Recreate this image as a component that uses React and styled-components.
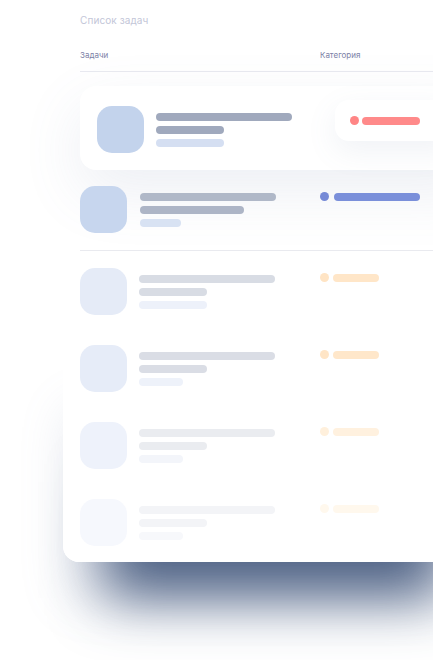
import React from "react";
import styled, { createGlobalStyle } from "styled-components";

const GlobalStyle = createGlobalStyle`
  html, body {
    margin: 0;
    padding: 0;
    background: #ffffff;
  }
  body {
    font-family: Inter, "Noto Sans", "Liberation Sans", sans-serif;
    overflow: hidden;
  }
`;

const Page = styled.div`
  position: relative;
  z-index: 0;
  width: 433px;
  height: 660px;
  overflow: hidden;
  background: #ffffff;
`;

const Card = styled.section`
  position: relative;
  margin-left: 63px;
  width: 420px;
  box-sizing: border-box;
  padding: 13px 0 3px 17px;
  background: #ffffff;
  border-radius: 0 0 0 16px;

  &::before {
    content: "";
    position: absolute;
    left: 0;
    right: 0;
    bottom: 0;
    height: 200px;
    border-radius: 0 0 0 16px;
    z-index: -1;
    box-shadow:
      0 78px 55px -42px rgba(52, 74, 114, 0.86),
      0 42px 50px -6px rgba(125, 140, 175, 0.2);
  }
`;

const Title = styled.h1`
  margin: 0;
  font-size: 10px;
  line-height: 14px;
  font-weight: 400;
  letter-spacing: 0.1px;
  color: #c3c6d8;
`;

const Header = styled.div`
  display: flex;
  margin-top: 22px;
  padding-bottom: 10px;
  border-bottom: 1px solid #e9eaf0;
`;

const HeadCell = styled.div`
  width: ${(p) => (p.$w ? `${p.$w}px` : "auto")};
  font-size: 8px;
  line-height: 12px;
  color: #7c81a6;
`;

const LiftedRow = styled.div`
  display: flex;
  align-items: flex-start;
  margin-top: 14px;
  padding: 20px 0 17px 17px;
  background: #ffffff;
  border-radius: 16px 0 0 16px;
  box-shadow: 0 22px 60px rgba(110, 125, 165, 0.12);
`;

const Row = styled.div`
  display: flex;
  align-items: flex-start;
  padding: ${(p) => p.$pad};
  border-bottom: ${(p) => (p.$divider ? "1px solid #e9eaef" : "none")};
`;

const TaskCell = styled.div`
  display: flex;
  align-items: center;
  gap: ${(p) => p.$gap}px;
  width: ${(p) => p.$w}px;
  flex-shrink: 0;
`;

const Avatar = styled.div`
  width: 47px;
  height: 47px;
  border-radius: 15px;
  background: ${(p) => p.$bg};
  flex-shrink: 0;
`;

const Lines = styled.div`
  display: flex;
  flex-direction: column;
  gap: 5px;
`;

const Line = styled.div`
  width: ${(p) => p.$w}px;
  height: 8px;
  border-radius: 4px;
  background: ${(p) => p.$bg};
`;

const Category = styled.div`
  display: flex;
  align-items: center;
  gap: ${(p) => p.$gap}px;
  margin-top: ${(p) => p.$top}px;
`;

const Pill = styled.div`
  display: flex;
  align-items: center;
  gap: 3px;
  box-sizing: border-box;
  width: 120px;
  height: 41px;
  margin-top: -6px;
  padding-left: 15px;
  background: #ffffff;
  border-radius: 14px 0 0 14px;
  box-shadow: 0 10px 30px rgba(110, 125, 165, 0.1);
`;

const Dot = styled.div`
  width: 9px;
  height: 9px;
  border-radius: 50%;
  background: ${(p) => p.$bg};
  flex-shrink: 0;
`;

const Bar = styled.div`
  width: ${(p) => p.$w}px;
  height: 8px;
  border-radius: 4px;
  background: ${(p) => p.$bg};
`;

const fadedRows = [
  { avatar: "#e5ebf7", line: "#d8dce4", sub: "#edf1fa", subW: 68, dot: "#ffe4c4", bar: "#ffe6c8" },
  { avatar: "#e6ecf8", line: "#dadde5", sub: "#eef2fa", subW: 44, dot: "#ffe5c6", bar: "#ffe7ca" },
  { avatar: "#eef2fb", line: "#eaecf0", sub: "#f3f5fa", subW: 44, dot: "#fff0dc", bar: "#fff1df" },
  { avatar: "#f6f8fd", line: "#f3f4f7", sub: "#f7f8fb", subW: 44, dot: "#fff8ed", bar: "#fff8ed" },
];

export default function App() {
  return (
    <>
      <GlobalStyle />
      <Page>
        <Card>
          <Title>Список задач</Title>
          <Header>
            <HeadCell $w={240}>Задачи</HeadCell>
            <HeadCell>Категория</HeadCell>
          </Header>

          <LiftedRow>
            <TaskCell $w={238} $gap={12}>
              <Avatar $bg="#c3d3ec" />
              <Lines>
                <Line $w={136} $bg="#a0a9bd" />
                <Line $w={68} $bg="#a0a9bd" />
                <Line $w={68} $bg="#d5dff2" />
              </Lines>
            </TaskCell>
            <Pill>
              <Dot $bg="#ff8585" />
              <Bar $w={58} $bg="#ff8a8a" />
            </Pill>
          </LiftedRow>

          <Row $pad="16px 0 17px 0" $divider>
            <TaskCell $w={240} $gap={13}>
              <Avatar $bg="#c7d6ee" />
              <Lines>
                <Line $w={136} $bg="#b0b8c8" />
                <Line $w={104} $bg="#adb5c6" />
                <Line $w={41} $bg="#d8e2f3" />
              </Lines>
            </TaskCell>
            <Category $gap={5} $top={6}>
              <Dot $bg="#7589d6" />
              <Bar $w={86} $bg="#7a8fda" />
            </Category>
          </Row>

          {fadedRows.map((r, i) => (
            <Row key={i} $pad="17px 0 13px 0">
              <TaskCell $w={240} $gap={12}>
                <Avatar $bg={r.avatar} />
                <Lines>
                  <Line $w={136} $bg={r.line} />
                  <Line $w={68} $bg={r.line} />
                  <Line $w={r.subW} $bg={r.sub} />
                </Lines>
              </TaskCell>
              <Category $gap={4} $top={5}>
                <Dot $bg={r.dot} />
                <Bar $w={46} $bg={r.bar} />
              </Category>
            </Row>
          ))}
        </Card>
      </Page>
    </>
  );
}
